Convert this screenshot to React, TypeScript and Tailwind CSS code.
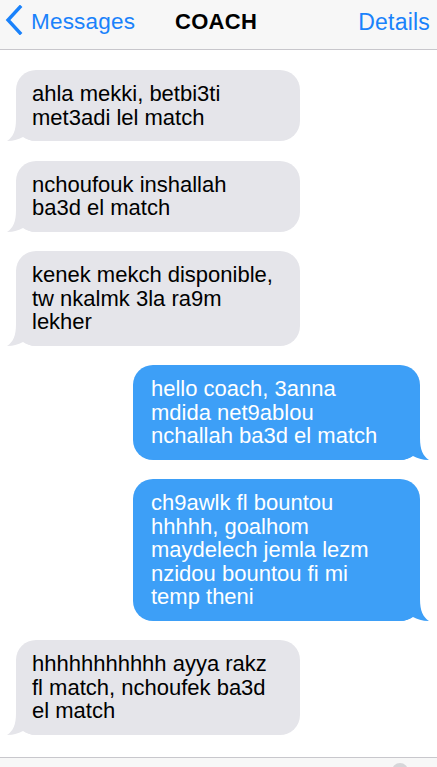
import React from 'react';

// Conversation data
const MESSAGES: { from: 'them' | 'me'; lines: string[] }[] = [
  { from: 'them', lines: ['ahla mekki, betbi3ti', 'met3adi lel match'] },
  { from: 'them', lines: ['nchoufouk inshallah', 'ba3d el match'] },
  { from: 'them', lines: ['kenek mekch disponible,', 'tw nkalmk 3la ra9m', 'lekher'] },
  { from: 'me', lines: ['hello coach, 3anna', 'mdida net9ablou', 'nchallah ba3d el match'] },
  {
    from: 'me',
    lines: ['ch9awlk fl bountou', 'hhhhh, goalhom', 'maydelech jemla lezm', 'nzidou bountou fi mi', 'temp theni'],
  },
  { from: 'them', lines: ['hhhhhhhhhhh ayya rakz', 'fl match, nchoufek ba3d', 'el match'] },
];

const Tail: React.FC<{ color: string; side: 'left' | 'right' }> = ({ color, side }) => (
  <svg
    width="30"
    height="22"
    viewBox="0 0 30 22"
    className={
      side === 'left'
        ? 'absolute -left-[10px] bottom-0'
        : 'absolute -right-[10px] bottom-0 scale-x-[-1]'
    }
  >
    <path d="M10 0 C10 12 7 18 1 22 C8 22 13 20 17 18 C20 20 25 22 30 22 L30 0 Z" fill={color} />
  </svg>
);

const Bubble: React.FC<{ from: 'them' | 'me'; lines: string[] }> = ({ from, lines }) => {
  const mine = from === 'me';
  return (
    <div
      className={
        mine
          ? 'relative ml-auto mr-[17px] w-[287px] rounded-[20px] bg-[#3d9ff7] pl-[18px] py-[12px] text-white'
          : 'relative ml-[16px] w-[284px] rounded-[20px] bg-[#e5e5ea] pl-[16px] py-[12px] text-black'
      }
    >
      <p className="relative z-10 text-[22px] leading-[23.5px]">
        {lines.map((l, i) => (
          <span key={i} className="block whitespace-nowrap">
            {l}
          </span>
        ))}
      </p>
      <Tail color={mine ? '#3d9ff7' : '#e5e5ea'} side={mine ? 'right' : 'left'} />
    </div>
  );
};

export default function App() {
  return (
    <div
      className="w-[437px] h-[767px] overflow-hidden bg-white flex flex-col"
      style={{ fontFamily: '"Liberation Sans", Arial, sans-serif' }}
    >
      {/* Header */}
      <div className="h-[50px] shrink-0 bg-[#f7f7f7] border-b border-[#c8c7cc] flex items-start pt-[5px] relative">
        <div className="flex items-start pl-[4px] text-[#1a82fb]">
          <svg width="20" height="30" viewBox="0 0 20 30" className="mt-[0px]">
            <polyline points="16,2 4,15 16,28" fill="none" stroke="#1a82fb" strokeWidth="3.4" strokeLinecap="square" />
          </svg>
          <span className="ml-[7px] text-[22.5px] tracking-[0.2px]">Messages</span>
        </div>
        <span className="absolute left-[175px] top-[5px] text-[22px] font-bold text-black tracking-[0.3px]">COACH</span>
        <span className="ml-auto pr-[7px] text-[23px] tracking-[0.2px] text-[#1a82fb]">Details</span>
      </div>

      {/* Conversation */}
      <div className="flex flex-col gap-[19.5px] pt-[20px]">
        {MESSAGES.map((m, i) => (
          <Bubble key={i} from={m.from} lines={m.lines} />
        ))}
      </div>

      {/* Input bar */}
      <div className="mt-auto h-[10px] shrink-0 bg-[#f7f7f7] border-t border-[#c8c7cc] relative">
        <div className="absolute left-[392px] top-[5px] w-[16px] h-[16px] rounded-full bg-[#d6d6d9]" />
      </div>
    </div>
  );
}
